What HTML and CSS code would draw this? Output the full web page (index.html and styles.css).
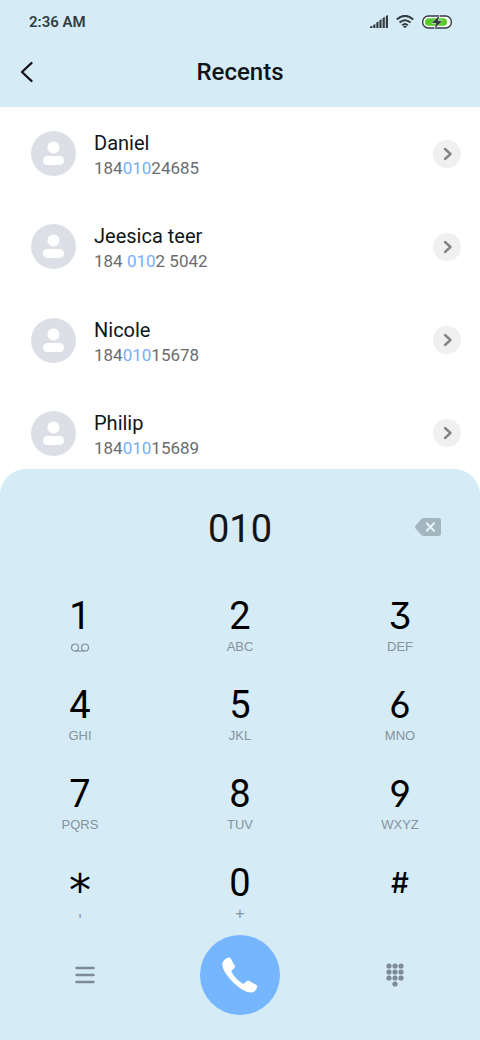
FILE: index.html
```html
<!DOCTYPE html>
<html lang="en">
<head>
<meta charset="utf-8">
<meta name="viewport" content="width=device-width, initial-scale=1">
<title>Recents</title>
<link rel="stylesheet" href="styles.css">
</head>
<body>
<svg class="sprite" aria-hidden="true">
  <symbol id="person" viewBox="0 0 45 45"><circle cx="22.500" cy="16.500" r="6"/><rect x="12" y="25" width="21" height="9" rx="4.500"/></symbol>
  <symbol id="chevron" viewBox="0 0 28 28"><path d="M12 9l5.500 5-5.500 5" fill="none" stroke="currentColor" stroke-width="2.400" stroke-linecap="round" stroke-linejoin="round"/></symbol>
</svg>
<div class="app">
  <header class="top">
    <div class="status">
      <span class="time">2:36 AM</span>
      <svg class="signal" viewBox="0 0 18 13" aria-hidden="true"><path d="M0 13v-1.500l2.400-.8V13zM3.200 13v-3l2.200-1V13zM6.300 13V7.500l2.200-1V13zM9.400 13V5.200l2.200-1V13zM12.600 13V3l2.200-1V13zM15.800 13V1L18 0v13z"/></svg>
      <svg class="wifi" viewBox="0 0 18 13" aria-hidden="true"><path d="M.8 4.500Q9-2.800 17.200 4.500M3.500 7.600Q9 2.800 14.500 7.600M6.200 10.300Q9 7.800 11.800 10.300" fill="none" stroke="currentColor" stroke-width="2"/><path d="M7 11.500q2-1.500 4 0L9 13.200z"/></svg>
      <svg class="battery" viewBox="0 0 30 14" aria-hidden="true"><rect x=".7" y="1" width="28.600" height="12" rx="5.600" fill="#fff" stroke="#333c40" stroke-width="1.400"/><rect x="3" y="3.200" width="22" height="7.600" rx="3.600" fill="#56cc2a"/><path d="M17.500 .5L9.800 8h4.200l-1.500 5.500L20.200 6H16z" fill="#333c40" stroke="#fff" stroke-width="1" paint-order="stroke"/></svg>
    </div>
    <div class="titlebar">
      <button class="back" type="button" aria-label="Back"><svg viewBox="0 0 14 22"><path d="M11.500 2L2 11l9.500 9" fill="none" stroke="currentColor" stroke-width="2.400" stroke-linecap="round" stroke-linejoin="round"/></svg></button>
      <h1>Recents</h1>
    </div>
  </header>

  <ul class="contacts">
    <li class="contact">
      <svg class="avatar" aria-hidden="true"><use href="#person"/></svg>
      <div class="info"><div class="name">Daniel</div><div class="number">184<mark>010</mark>24685</div></div>
      <button class="details" type="button" aria-label="Daniel details"><svg><use href="#chevron"/></svg></button>
    </li>
    <li class="contact">
      <svg class="avatar" aria-hidden="true"><use href="#person"/></svg>
      <div class="info"><div class="name">Jeesica teer</div><div class="number">184 <mark>010</mark>2 5042</div></div>
      <button class="details" type="button" aria-label="Jeesica teer details"><svg><use href="#chevron"/></svg></button>
    </li>
    <li class="contact">
      <svg class="avatar" aria-hidden="true"><use href="#person"/></svg>
      <div class="info"><div class="name">Nicole</div><div class="number">184<mark>010</mark>15678</div></div>
      <button class="details" type="button" aria-label="Nicole details"><svg><use href="#chevron"/></svg></button>
    </li>
    <li class="contact">
      <svg class="avatar" aria-hidden="true"><use href="#person"/></svg>
      <div class="info"><div class="name">Philip</div><div class="number">184<mark>010</mark>15689</div></div>
      <button class="details" type="button" aria-label="Philip details"><svg><use href="#chevron"/></svg></button>
    </li>
  </ul>

  <main class="dialer">
    <div class="display">
      <output class="entry">010</output>
      <button class="erase" type="button" aria-label="Delete digit"><svg viewBox="0 0 26 18"><path d="M8.500 0H23.500Q26 0 26 2.500V15.500Q26 18 23.500 18H8.500Q7.300 18 6.400 17L.6 10.500Q-.6 9 .6 7.500L6.400 1Q7.300 0 8.500 0z" fill="#a3b5bf"/><path d="M11.800 5.300l7.200 7.400M19 5.300l-7.200 7.400" fill="none" stroke="#e4f3fa" stroke-width="2" stroke-linecap="round"/></svg></button>
    </div>
    <div class="keys">
      <button class="key" type="button"><span class="digit">1</span><span class="letters"><svg class="voicemail" viewBox="0 0 18 9" aria-label="Voicemail"><path d="M4 8h10" /><circle cx="4" cy="4.500" r="3.500"/><circle cx="14" cy="4.500" r="3.500"/></svg></span></button>
      <button class="key" type="button"><span class="digit">2</span><span class="letters">ABC</span></button>
      <button class="key" type="button"><span class="digit geometric">3</span><span class="letters">DEF</span></button>
      <button class="key" type="button"><span class="digit">4</span><span class="letters">GHI</span></button>
      <button class="key" type="button"><span class="digit">5</span><span class="letters">JKL</span></button>
      <button class="key" type="button"><span class="digit geometric">6</span><span class="letters">MNO</span></button>
      <button class="key" type="button"><span class="digit">7</span><span class="letters">PQRS</span></button>
      <button class="key" type="button"><span class="digit">8</span><span class="letters">TUV</span></button>
      <button class="key" type="button"><span class="digit geometric">9</span><span class="letters">WXYZ</span></button>
      <button class="key" type="button"><span class="digit star">*</span><span class="letters comma">,</span></button>
      <button class="key" type="button"><span class="digit">0</span><span class="letters plus">+</span></button>
      <button class="key" type="button"><span class="digit hash">#</span></button>
    </div>
    <div class="actions">
      <button class="action" type="button" aria-label="Menu"><svg class="menu" viewBox="0 0 20 18"><path d="M1.500 2h17M1.500 9h17M1.500 16h17" stroke="currentColor" stroke-width="2.400" stroke-linecap="round"/></svg></button>
      <button class="call" type="button" aria-label="Call"><svg viewBox="0 0 36 36"><path d="M2.500 2.700Q5 .4 7.300.5Q8.300.6 8.800 1.500L13 9.300Q13.300 10.200 12.500 10.900L9.700 13.600Q9.300 14.300 9.800 15.200Q13.800 22.500 20.600 26.600Q21.400 27 22 26.400L25 23.900Q25.900 23.300 26.800 23.800L34.400 27.900Q35.600 28.600 35.200 29.900Q34 34.600 30.200 35.500Q22.500 36.300 11 25.200Q.3 14.400.2 7Q.4 4.500 2.500 2.700z" fill="#fff"/></svg></button>
      <button class="action" type="button" aria-label="Hide keypad"><svg class="pad" viewBox="0 0 18 24"><path d="M3 3h.01M9 3h.01M15 3h.01M3 9h.01M9 9h.01M15 9h.01M3 15h.01M9 15h.01M15 15h.01M9 21h.01" stroke="currentColor" stroke-width="5.200" stroke-linecap="round"/></svg></button>
    </div>
  </main>
</div>
</body>
</html>
```
FILE: styles.css
```css
* { box-sizing: border-box; }

body {
  margin: 0;
  background: #fff;
  color: #111517;
  font-family: Roboto, "Liberation Sans", sans-serif;
}

button {
  display: grid;
  place-items: center;
  padding: 0;
  border: 0;
  background: none;
  color: inherit;
  font: inherit;
  cursor: pointer;
}

svg { display: block; }

.sprite {
  position: absolute;
  width: 0;
  height: 0;
}

.app {
  display: flex;
  flex-direction: column;
  min-height: 100vh;
}

.top { background: #d5ebf6; }

.status {
  display: flex;
  align-items: center;
  gap: 8px;
  height: 43px;
  padding: 0 28px 0 29px;
  color: #333c40;
}

.time {
  margin-right: auto;
  font-size: 15px;
  font-weight: 600;
}

.signal { width: 18px; height: 13px; fill: currentColor; }
.wifi { width: 18px; height: 13px; fill: currentColor; }
.battery { width: 30px; height: 14px; }

.titlebar {
  display: grid;
  grid-template-columns: 28px 1fr 28px;
  align-items: center;
  height: 64px;
  padding: 0 13px 7px;
}

.back { height: 28px; }
.back svg { width: 14px; height: 22px; }

h1 {
  margin: 0;
  font-size: 24px;
  line-height: 32px;
  font-weight: 500;
  text-align: center;
}

.contacts {
  display: grid;
  grid-auto-rows: 1fr;
  min-height: 373px;
  margin: 0;
  padding: 0;
  list-style: none;
}

.contact {
  display: flex;
  align-items: center;
  gap: 18px;
  padding: 0 19px 0 31px;
}

.avatar {
  width: 45px;
  height: 45px;
  border-radius: 50%;
  background: #dce0e6;
  fill: #fff;
}

.info { flex: 1; padding-top: 3px; }

.name {
  font-size: 20px;
  line-height: 26px;
}

.number {
  color: #6c6c6c;
  font-size: 17px;
  line-height: 24px;
}

mark {
  background: none;
  color: #78aefb;
}

.details {
  width: 28px;
  height: 28px;
  border-radius: 50%;
  background: #f0f0f0;
  color: #858585;
}

.details svg { width: 28px; height: 28px; }

.dialer {
  position: relative;
  flex: 1;
  margin-top: -11px;
  padding-bottom: 25px;
  border-radius: 26px 26px 0 0;
  background: #d5ebf6;
}

.display {
  display: grid;
  grid-template-columns: 42px 1fr 42px;
  align-items: center;
  height: 119px;
  padding: 0 31px;
}

.entry {
  grid-column: 2;
  font-size: 38px;
  line-height: 44px;
  text-align: center;
}

.erase { padding-bottom: 3px; }
.erase svg { width: 26px; height: 18px; }

.keys {
  display: grid;
  grid-template-columns: repeat(3, 1fr);
  row-gap: 9px;
}

.key {
  display: flex;
  flex-direction: column;
  align-items: center;
  gap: 4px;
  height: 80px;
  padding-top: 10px;
  color: #000;
}

.digit {
  height: 36px;
  font-size: 38px;
  line-height: 36px;
}

.geometric {
  font-family: Inter, Roboto, sans-serif;
  font-size: 37px;
  font-feature-settings: "cv03", "cv04", "cv09";
}

.star {
  font-family: "DejaVu Sans", sans-serif;
  font-size: 44px;
  line-height: 52px;
}

.hash {
  font-family: Inter, Roboto, sans-serif;
  font-size: 28px;
  font-weight: 500;
}

.letters {
  display: grid;
  place-items: center;
  height: 18px;
  color: #85939b;
  font-family: "Liberation Sans", Arial, sans-serif;
  font-size: 13px;
  line-height: 18px;
}

.plus { font-size: 16px; }

.comma {
  font-size: 16px;
  line-height: 12px;
  place-items: start center;
}

.voicemail {
  width: 18px;
  height: 9px;
  fill: none;
  stroke: currentColor;
  stroke-width: 1.2;
}

.actions {
  display: grid;
  grid-template-columns: repeat(3, 1fr);
  place-items: center;
  padding: 0 8px;
}

.action {
  width: 48px;
  height: 48px;
  color: #7d8b94;
}

.menu { width: 20px; height: 18px; }
.pad { width: 18px; height: 24px; }

.call {
  width: 80px;
  height: 80px;
  border-radius: 50%;
  background: #75b6ff;
}

.call svg { width: 36px; height: 36px; }
```
